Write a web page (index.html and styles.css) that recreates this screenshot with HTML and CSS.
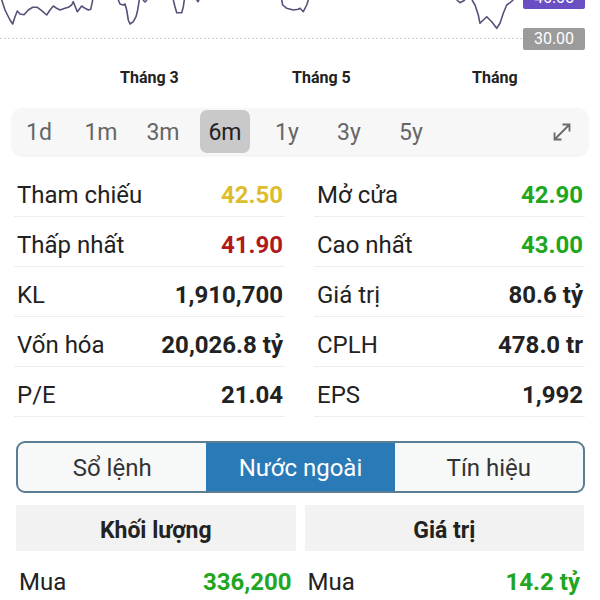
FILE: index.html
```html
<!DOCTYPE html>
<html lang="vi">
<head>
  <meta charset="UTF-8">
  <meta name="viewport" content="width=device-width, initial-scale=1">
  <title>Chi tiết mã</title>
  <link rel="stylesheet" href="styles.css">
</head>
<body>
  <div class="chart">
    <svg class="chart-svg" width="600" height="60" viewBox="0 0 600 60">
      <line class="grid-line" x1="0" y1="38.5" x2="522" y2="38.5"/>
      <polyline class="price-line" points="1.7,0 5,10 10,20 12.7,24 15,16.7 17.3,11 20,14 24,14.7 28.3,10 32.7,7.3 37.3,7.3 41.7,10.7 46.7,15 50,10 53.3,6 56.7,8.3 60,10 65,8.3 68.3,7.3 71.7,5 73.3,1.7 75,6 77.3,11.7 80,8.3 81.7,6 85,8.3 88.3,10 90.7,9.3 92,3.3 92.7,0"/>
      <polyline class="price-line" points="118.3,0 120,4 123.3,5 125,4 126.7,10 128.3,20 130,24 133.3,21.7 136,16.7 137.7,10 138.7,3.3 139.3,0"/>
      <polyline class="price-line" points="143,0 145,2 147,0"/>
      <polyline class="price-line" points="173.3,0 175,6.7 176.7,12.7 181.7,12.7 183.3,6.7 184.3,0"/>
      <polyline class="price-line" points="196.7,0 198,1.7 199,0"/>
      <polyline class="price-line" points="281.7,0 282.7,5 286.7,8.3 293.3,10 298.3,9.3 300,8.3 303.3,11.7 306.7,5 308.3,0"/>
      <polyline class="price-line" points="456.7,0 460,2.7 465,0"/>
      <polyline class="price-line" points="472,0 475,5 478.3,15 480,23.3 483.3,20 486.7,16.7 491.7,21.7 496.7,28.3 500,23.3 503.3,13.3 506.7,5 510,2.7 513.3,0"/>
    </svg>
    <span class="price-tag tag-last">46.05</span>
    <span class="price-tag tag-low">30.00</span>
  </div>

  <div class="months">
    <span>Tháng 3</span>
    <span>Tháng 5</span>
    <span>Tháng</span>
  </div>

  <div class="periods">
    <span class="period">1d</span>
    <span class="period">1m</span>
    <span class="period">3m</span>
    <span class="period active">6m</span>
    <span class="period">1y</span>
    <span class="period">3y</span>
    <span class="period">5y</span>
    <svg class="expand-icon" width="24" height="24" viewBox="0 0 24 24">
      <path d="M4.5 19.5 L19.5 4.5 M12.5 4.5 H19.5 V11.5 M4.5 12.5 V19.5 H11.5"/>
    </svg>
  </div>

  <div class="stats">
    <div class="stat-col">
      <div class="stat-row"><span>Tham chiếu</span><b class="ref">42.50</b></div>
      <div class="stat-row"><span>Thấp nhất</span><b class="down">41.90</b></div>
      <div class="stat-row"><span>KL</span><b>1,910,700</b></div>
      <div class="stat-row"><span>Vốn hóa</span><b>20,026.8 tỷ</b></div>
      <div class="stat-row"><span>P/E</span><b>21.04</b></div>
    </div>
    <div class="stat-col">
      <div class="stat-row"><span>Mở cửa</span><b class="up">42.90</b></div>
      <div class="stat-row"><span>Cao nhất</span><b class="up">43.00</b></div>
      <div class="stat-row"><span>Giá trị</span><b>80.6 tỷ</b></div>
      <div class="stat-row"><span>CPLH</span><b>478.0 tr</b></div>
      <div class="stat-row"><span>EPS</span><b>1,992</b></div>
    </div>
  </div>

  <div class="tabs">
    <span class="tab">Sổ lệnh</span>
    <span class="tab active">Nước ngoài</span>
    <span class="tab">Tín hiệu</span>
  </div>

  <div class="foreign">
    <div class="foreign-col">
      <div class="foreign-head">Khối lượng</div>
      <div class="foreign-row"><span>Mua</span><b class="up">336,200</b></div>
    </div>
    <div class="foreign-col">
      <div class="foreign-head">Giá trị</div>
      <div class="foreign-row"><span>Mua</span><b class="up">14.2 tỷ</b></div>
    </div>
  </div>
</body>
</html>
```

FILE: styles.css
```css
body {
  margin: 0;
  font-family: Roboto, "Noto Sans", Arial, sans-serif;
  color: #222;
  background: #fff;
  overflow: hidden;
}

/* chart */
.chart {
  position: relative;
  height: 60px;
  overflow: hidden;
}

.chart-svg {
  display: block;
}

.grid-line {
  stroke: #cfcfcf;
  stroke-width: 1;
  stroke-dasharray: 2 2;
}

.price-line {
  fill: none;
  stroke: #57517a;
  stroke-width: 1.6;
  stroke-linejoin: round;
}

.price-tag {
  position: absolute;
  left: 523px;
  width: 62px;
  height: 22px;
  line-height: 22px;
  text-align: center;
  color: #fff;
  font-size: 16px;
  border-radius: 2px;
}

.tag-last {
  top: -13px;
  background: #6a4ec4;
}

.tag-low {
  top: 28px;
  background: #9b9b9b;
}

.months {
  display: grid;
  grid-template-columns: 172px 180px auto;
  padding-left: 120px;
  margin-top: 6px;
  font-size: 16px;
  line-height: 24px;
  font-weight: bold;
  color: #222;
}

/* period selector */
.periods {
  display: flex;
  align-items: center;
  gap: 12px;
  margin: 18px 12px 0 12px;
  padding: 1px 2px;
  height: 45px;
  background: #f7f7f7;
  border-radius: 11px;
  box-shadow: 0 1px 3px rgba(0,0,0,0.08);
}

.period {
  width: 50px;
  height: 43px;
  line-height: 45px;
  text-align: center;
  font-size: 23px;
  color: #666;
  border-radius: 7px;
}

.period.active {
  background: #c9c9c9;
  color: #222;
}

.expand-icon {
  margin-left: auto;
  margin-right: 12px;
}

.expand-icon path {
  fill: none;
  stroke: #6b6b6b;
  stroke-width: 1.8;
}

/* stats */
.stats {
  display: grid;
  grid-template-columns: 1fr 1fr;
  gap: 29px;
  padding: 0 15px 0 14px;
  margin-top: 12px;
}

.stat-row {
  display: flex;
  justify-content: space-between;
  align-items: center;
  height: 43px;
  padding: 6px 2px 0 3px;
  border-bottom: 1px solid #eeeeee;
  font-size: 24px;
}

.stat-row b {
  font-weight: bold;
}

.ref { color: #dcbd2e; }
.down { color: #b01a1a; }
.up { color: #20a620; }

/* tabs */
.tabs {
  display: flex;
  margin: 24px 15px 0 16px;
  height: 48px;
  border: 2px solid #5a7d94;
  border-radius: 9px;
  overflow: hidden;
  background: #f7f8f8;
}

.tab {
  flex: 1;
  padding-top: 3px;
  line-height: 45px;
  text-align: center;
  font-size: 24px;
  color: #333;
}

.tab.active {
  background: #2a7ab8;
  color: #fff;
}

/* foreign trading */
.foreign {
  display: grid;
  grid-template-columns: 1fr 1fr;
  gap: 9px;
  padding: 0 16px;
  margin-top: 12px;
}

.foreign-head {
  height: 41px;
  padding-top: 5px;
  line-height: 41px;
  text-align: center;
  background: #f2f2f2;
  font-size: 23px;
  font-weight: bold;
}

.foreign-row {
  display: flex;
  justify-content: space-between;
  align-items: center;
  height: 50px;
  padding: 6px 4px 0 3px;
  font-size: 24px;
}
```
